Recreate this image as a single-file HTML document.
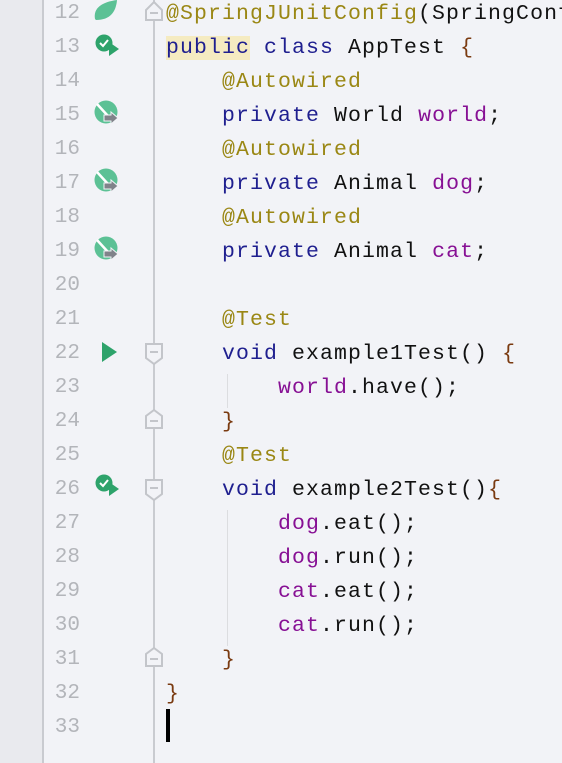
<!DOCTYPE html>
<html><head><meta charset="utf-8"><style>
body{margin:0;width:562px;height:763px;background:#f2f3f7;overflow:hidden;position:relative;font-family:"Liberation Mono",monospace;}
.strip{position:absolute;left:0;top:0;width:42px;height:763px;background:#e9eaee;border-right:2px solid #c9cbd0;}
.fold{position:absolute;left:153px;top:0;width:2px;height:763px;background:#c9cbd0;}
.ln{position:absolute;left:46px;width:34px;text-align:right;font-size:21px;color:#b3b5ba;height:34px;line-height:34px;margin-top:2px;}
.code{position:absolute;left:166px;right:0;overflow:hidden;font-size:21.5px;letter-spacing:1.1px;height:34px;line-height:34px;white-space:pre;color:#111;}
.k{color:#1f1f8f}.a{color:#9a8714}.f{color:#871094}.b{color:#7a3a10}
.hl{background:#f5ebc1}
.guide{position:absolute;width:1px;background:#dcdde0;}
.cur{position:absolute;left:166px;top:709px;width:4px;height:33px;background:#000;}
</style></head><body>
<div class="strip"></div>
<div class="fold"></div>
<div class="guide" style="left:227px;top:374px;height:34px"></div>
<div class="guide" style="left:227px;top:510px;height:136px"></div>

<div class="ln" style="top:-5px">12</div>
<div class="ln" style="top:29px">13</div>
<div class="ln" style="top:63px">14</div>
<div class="ln" style="top:97px">15</div>
<div class="ln" style="top:131px">16</div>
<div class="ln" style="top:165px">17</div>
<div class="ln" style="top:199px">18</div>
<div class="ln" style="top:233px">19</div>
<div class="ln" style="top:267px">20</div>
<div class="ln" style="top:301px">21</div>
<div class="ln" style="top:335px">22</div>
<div class="ln" style="top:369px">23</div>
<div class="ln" style="top:403px">24</div>
<div class="ln" style="top:437px">25</div>
<div class="ln" style="top:471px">26</div>
<div class="ln" style="top:505px">27</div>
<div class="ln" style="top:539px">28</div>
<div class="ln" style="top:573px">29</div>
<div class="ln" style="top:607px">30</div>
<div class="ln" style="top:641px">31</div>
<div class="ln" style="top:675px">32</div>
<div class="ln" style="top:709px">33</div>

<div class="code" style="top:-3px"><span class="a">@SpringJUnitConfig</span>(SpringConfig.class)</div>
<div class="code" style="top:31px"><span class="k hl">public</span><span class="k"> class </span>AppTest <span class="b">{</span></div>
<div class="code" style="top:65px">    <span class="a">@Autowired</span></div>
<div class="code" style="top:99px">    <span class="k">private </span>World <span class="f">world</span>;</div>
<div class="code" style="top:133px">    <span class="a">@Autowired</span></div>
<div class="code" style="top:167px">    <span class="k">private </span>Animal <span class="f">dog</span>;</div>
<div class="code" style="top:201px">    <span class="a">@Autowired</span></div>
<div class="code" style="top:235px">    <span class="k">private </span>Animal <span class="f">cat</span>;</div>
<div class="code" style="top:303px">    <span class="a">@Test</span></div>
<div class="code" style="top:337px">    <span class="k">void </span>example1Test() <span class="b">{</span></div>
<div class="code" style="top:371px">        <span class="f">world</span>.have();</div>
<div class="code" style="top:405px">    <span class="b">}</span></div>
<div class="code" style="top:439px">    <span class="a">@Test</span></div>
<div class="code" style="top:473px">    <span class="k">void </span>example2Test()<span class="b">{</span></div>
<div class="code" style="top:507px">        <span class="f">dog</span>.eat();</div>
<div class="code" style="top:541px">        <span class="f">dog</span>.run();</div>
<div class="code" style="top:575px">        <span class="f">cat</span>.eat();</div>
<div class="code" style="top:609px">        <span class="f">cat</span>.run();</div>
<div class="code" style="top:643px">    <span class="b">}</span></div>
<div class="code" style="top:677px"><span class="b">}</span></div>
<div class="cur"></div>

<svg width="562" height="763" style="position:absolute;left:0;top:0">
<g fill="#f2f3f7" stroke="#c3c5ca" stroke-width="2">
<path d="M146 20 V10 L154 2 L162 10 V20 Z"/>
<path d="M146 344 V358 L154 364 L162 358 V344 Z"/>
<path d="M146 428 V416 L154 410 L162 416 V428 Z"/>
<path d="M146 480 V494 L154 500 L162 494 V480 Z"/>
<path d="M146 666 V654 L154 648 L162 654 V666 Z"/>
</g>
<g stroke="#c3c5ca" stroke-width="2">
<line x1="150" y1="13" x2="158" y2="13"/><line x1="150" y1="352" x2="158" y2="352"/>
<line x1="150" y1="421" x2="158" y2="421"/><line x1="150" y1="488" x2="158" y2="488"/>
<line x1="150" y1="659" x2="158" y2="659"/>
</g>
<path d="M95 19 C93 8 102 2 117 0 C116 12 110 20 96 20 Z" fill="#5cc195"/>
<g><circle cx="104" cy="43" r="8.5" fill="#2ea36b"/><path d="M100 43 l3 3 l5 -6" stroke="#fff" stroke-width="2" fill="none"/><path d="M109 42 L119 49 L109 56 Z" fill="#2ea36b"/></g>
<g><circle cx="104" cy="483" r="8.5" fill="#2ea36b"/><path d="M100 483 l3 3 l5 -6" stroke="#fff" stroke-width="2" fill="none"/><path d="M109 482 L119 489 L109 496 Z" fill="#2ea36b"/></g>
<path d="M102 342 L117 352 L102 362 Z" fill="#2ea36b"/>
<g id="bn"><circle cx="106" cy="112" r="11.5" fill="#5cc195"/><path d="M97 104 L108 116" stroke="#fff" stroke-width="2.5"/><path d="M104 115 h7 v-3 l7 6 l-7 6 v-3 h-7 Z" fill="#80838a" stroke="#f2f3f7" stroke-width="1"/></g>
<use href="#bn" y="68"/><use href="#bn" y="136"/>
</svg>
</body></html>
